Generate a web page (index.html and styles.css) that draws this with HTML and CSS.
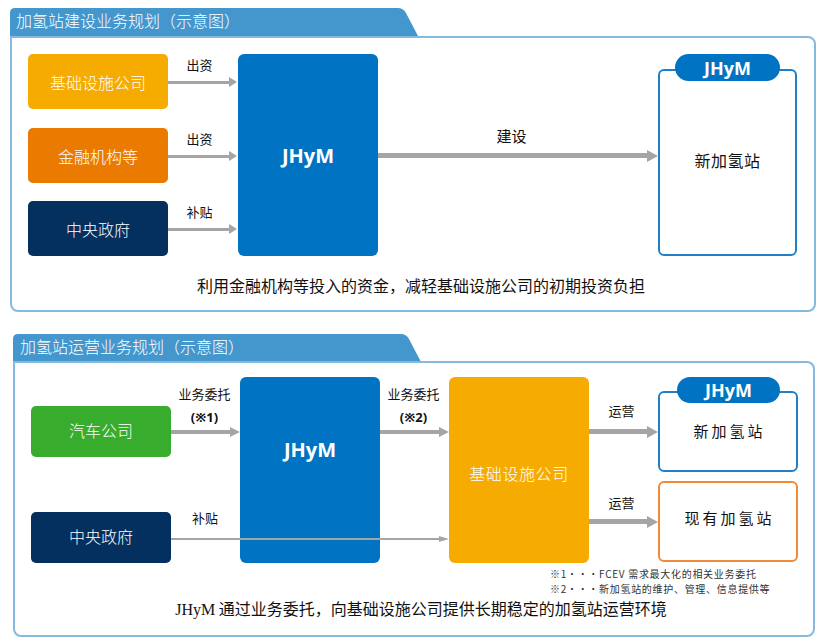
FILE: index.html
```html
<!DOCTYPE html>
<html lang="zh-CN">
<head>
<meta charset="utf-8">
<title>加氢站业务规划</title>
<link rel="stylesheet" href="styles.css">
</head>
<body>
<div class="page">
  <section class="section section--build">
    <div class="tab">加氢站建设业务规划（示意图）</div>
    <div class="panel">
      <div class="grid-build">
        <div class="box box--infra b-r1">基础设施公司</div>
        <div class="arrow arrow--sm b-a1"><div class="arrow-label">出资</div><div class="line"></div></div>
        <div class="box box--fin b-r3">金融机构等</div>
        <div class="arrow arrow--sm b-a3"><div class="arrow-label">出资</div><div class="line"></div></div>
        <div class="box box--gov b-r5">中央政府</div>
        <div class="arrow arrow--sm b-a5"><div class="arrow-label">补贴</div><div class="line"></div></div>
        <div class="big big--jhym b-jhym">JHyM</div>
        <div class="arrow arrow--build b-build"><div class="arrow-label">建设</div><div class="line"></div></div>
        <div class="station station--build b-station">
          <div class="pill pill--build">JHyM</div>
          <div class="station-text">新加氢站</div>
        </div>
      </div>
      <p class="summary summary--build">利用金融机构等投入的资金，减轻基础设施公司的初期投资负担</p>
    </div>
  </section>

  <section class="section section--ops">
    <div class="tab">加氢站运营业务规划（示意图）</div>
    <div class="panel">
      <div class="grid-ops">
        <div class="box box--car box--ops o-car">汽车公司</div>
        <div class="arrow arrow--ops o-a1">
          <div class="arrow-label arrow-label--two"><span>业务委托</span><span class="note">(※1)</span></div>
          <div class="line"></div>
        </div>
        <div class="box box--gov box--ops o-gov">中央政府</div>
        <div class="big big--jhym big--ops o-jhym">JHyM</div>
        <div class="arrow arrow--ops o-a2">
          <div class="arrow-label arrow-label--two"><span>业务委托</span><span class="note">(※2)</span></div>
          <div class="line"></div>
        </div>
        <div class="big big--infra o-infra">基础设施公司</div>
        <div class="arrow arrow--sub o-sub"><div class="arrow-label">补贴</div><div class="line"></div></div>
        <div class="ops-right o-right">
          <div class="st-row st-row--new">
            <div class="arrow arrow--run"><div class="arrow-label">运营</div><div class="line"></div></div>
            <div class="station station--ops">
              <div class="pill pill--ops">JHyM</div>
              <div class="station-text station-text--wide">新加氢站</div>
            </div>
          </div>
          <div class="st-row st-row--old">
            <div class="arrow arrow--run arrow--run2"><div class="arrow-label">运营</div><div class="line"></div></div>
            <div class="station station--old">
              <div class="station-text station-text--wide">现有加氢站</div>
            </div>
          </div>
        </div>
      </div>
      <div class="footnotes">
        <div>※1・・・FCEV 需求最大化的相关业务委托</div>
        <div>※2・・・新加氢站的维护、管理、信息提供等</div>
      </div>
      <p class="summary summary--ops"><span class="latin">JHyM</span> 通过业务委托，向基础设施公司提供长期稳定的加氢站运营环境</p>
    </div>
  </section>
</div>
</body>
</html>
```
FILE: styles.css
```css
* { box-sizing: border-box; }

body {
  margin: 0;
  background: #ffffff;
  font-family: "Noto Sans CJK SC", "Noto Sans", sans-serif;
  color: #111111;
}

.page {
  width: 823px;
  height: 641px;
  overflow: hidden;
  padding: 8px 0 0 10px;
}

.section { width: 806px; }
.section--ops { width: 802px; margin: 22px 0 0 3px; }

.tab {
  width: 408px;
  height: 28px;
  background: #4497cd;
  color: #ffffff;
  font-size: 16px;
  font-weight: 300;
  line-height: 25px;
  padding-left: 6px;
  white-space: nowrap;
  clip-path: path("M0 28 L0 5 Q0 0 5 0 L388 0 Q393 0 396 5 L408 28 Z");
}
.section--ops .tab { height: 27px; line-height: 24px; padding-left: 7px; }

.panel {
  border: 2px solid #86b9df;
  border-radius: 0 8px 8px 8px;
  padding: 16px 17px 15px 16px;
}
.section--ops .panel { padding: 14px 15px 15px 16px; }

/* ---------- grids ---------- */
.grid-build {
  display: grid;
  grid-template-columns: 140px 70px 140px 280px 139px;
  grid-template-rows: 55px 19px 55px 18px 55px;
}
.b-r1 { grid-column: 1; grid-row: 1; }
.b-a1 { grid-column: 2; grid-row: 1; }
.b-r3 { grid-column: 1; grid-row: 3; }
.b-a3 { grid-column: 2; grid-row: 3; }
.b-r5 { grid-column: 1; grid-row: 5; }
.b-a5 { grid-column: 2; grid-row: 5; }
.b-jhym { grid-column: 3; grid-row: 1 / 6; }
.b-build { grid-column: 4; grid-row: 1 / 6; }
.b-station { grid-column: 5; grid-row: 1 / 6; }

.grid-ops {
  display: grid;
  grid-template-columns: 140px 69px 140px 69px 140px 209px;
  grid-template-rows: 29px 51px 55px 51px;
}
.o-car { grid-column: 1; grid-row: 2; }
.o-a1 { grid-column: 2; grid-row: 1 / 3; }
.o-gov { grid-column: 1; grid-row: 4; }
.o-jhym { grid-column: 3; grid-row: 1 / 5; }
.o-a2 { grid-column: 4; grid-row: 1 / 3; }
.o-infra { grid-column: 5; grid-row: 1 / 5; }
.o-sub { grid-column: 2 / 5; grid-row: 4; }
.o-right { grid-column: 6; grid-row: 1 / 5; }

/* ---------- boxes ---------- */
.box {
  display: flex;
  align-items: center;
  justify-content: center;
  color: #ffffff;
  font-size: 16px;
  font-weight: 300;
  border-radius: 5px;
  white-space: nowrap;
}
.box--ops { padding-bottom: 4px; }
.box--infra { background: #f5ab00; }
.box--fin { background: #eb7b00; }
.box--gov { background: #03305f; }
.box--car { background: #37ac2d; }

.big {
  display: flex;
  align-items: center;
  justify-content: center;
  border-radius: 6px;
  color: #ffffff;
}
.big--jhym {
  background: #0074c2;
  font-family: "Open Sans", "Noto Sans", sans-serif;
  font-weight: 700;
  font-size: 20px;
}
.big--ops { padding-bottom: 42px; }
.big--infra {
  background: #f5ab00;
  font-size: 16px;
  font-weight: 300;
  letter-spacing: 0.6px;
  padding-top: 6px;
}

/* ---------- arrows ---------- */
.arrow {
  display: flex;
  flex-direction: column;
  justify-content: flex-end;
  --lw: 3px;
  --hh: 10px;
  --hl: 8px;
}
.arrow-label {
  font-size: 13px;
  line-height: 16px;
  text-align: center;
  white-space: nowrap;
  color: #111111;
}
.line {
  display: flex;
  align-items: center;
  height: var(--hh);
}
.line::before {
  content: "";
  flex: 1;
  height: var(--lw);
  background: #a5a5a5;
}
.line::after {
  content: "";
  width: 0;
  height: 0;
  border-left: var(--hl) solid #a5a5a5;
  border-top: calc(var(--hh) / 2) solid transparent;
  border-bottom: calc(var(--hh) / 2) solid transparent;
}

.arrow--sm { padding-bottom: 22px; padding-right: 1px; }
.arrow--sm .arrow-label { margin-bottom: 4px; padding-right: 6px; }

.arrow--build { padding-bottom: 94px; --lw: 5px; --hh: 13px; --hl: 11px; }
.arrow--build .arrow-label { font-size: 15px; line-height: 18px; margin-bottom: 4px; padding-right: 13px; }

.arrow--ops { padding-bottom: 20px; --lw: 4px; --hh: 11px; --hl: 10px; }
.arrow-label--two {
  display: flex;
  flex-direction: column;
  align-items: center;
  gap: 5px;
  line-height: 18px;
  padding-right: 2px;
}
.note { font-weight: 700; font-family: "Noto Sans", "Noto Sans CJK SC", sans-serif; }

.arrow--sub { padding-bottom: 21px; --lw: 2px; --hh: 7px; --hl: 10px; }
.arrow--sub .arrow-label { text-align: left; padding-left: 21px; margin-bottom: 10px; }

.arrow--run { width: 69px; padding-bottom: 34px; --lw: 5px; --hh: 13px; --hl: 11px; }
.arrow--run .arrow-label { margin-bottom: 6px; padding-right: 4px; }
.arrow--run2 .arrow-label { margin-bottom: 4px; }

/* ---------- stations ---------- */
.station {
  position: relative;
  display: flex;
  align-items: center;
  justify-content: center;
  background: #ffffff;
  border: 2px solid #1f7fc8;
  border-radius: 6px;
}
.station--build { margin-top: 15px; padding-bottom: 6px; }
.station--ops { width: 140px; padding-bottom: 2px; }
.station--old { width: 140px; border-color: #ef8a3b; padding-bottom: 8px; }

.pill {
  position: absolute;
  display: flex;
  align-items: center;
  justify-content: center;
  background: #0074c2;
  color: #ffffff;
  font-family: "Open Sans", "Noto Sans", sans-serif;
  font-weight: 700;
  font-size: 18px;
  border-radius: 14px;
}
.pill--build { top: -17px; left: 15px; width: 105px; height: 27px; }
.pill--ops { top: -16px; left: 17px; width: 103px; height: 26px; }

.station-text { font-size: 16px; letter-spacing: 0.5px; color: #111111; }
.station-text--wide { font-size: 15px; letter-spacing: 3px; padding-left: 3px; }

.ops-right { display: flex; flex-direction: column; }
.st-row { display: flex; height: 81px; }
.st-row--new { margin-top: 14px; }
.st-row--old { margin-top: 9px; }

/* ---------- text ---------- */
.summary {
  margin: 0;
  font-size: 16px;
  line-height: 20px;
  text-align: center;
  white-space: nowrap;
  color: #111111;
}
.summary--build { margin-top: 19px; padding-left: 17px; }
.summary--ops { margin-top: 2px; padding-left: 13px; }
.latin { font-family: "Liberation Serif", serif; }

.footnotes {
  margin-top: 3px;
  padding-left: 519px;
  font-size: 10px;
  line-height: 15px;
  letter-spacing: 0.7px;
  color: #333333;
  white-space: nowrap;
}
```
